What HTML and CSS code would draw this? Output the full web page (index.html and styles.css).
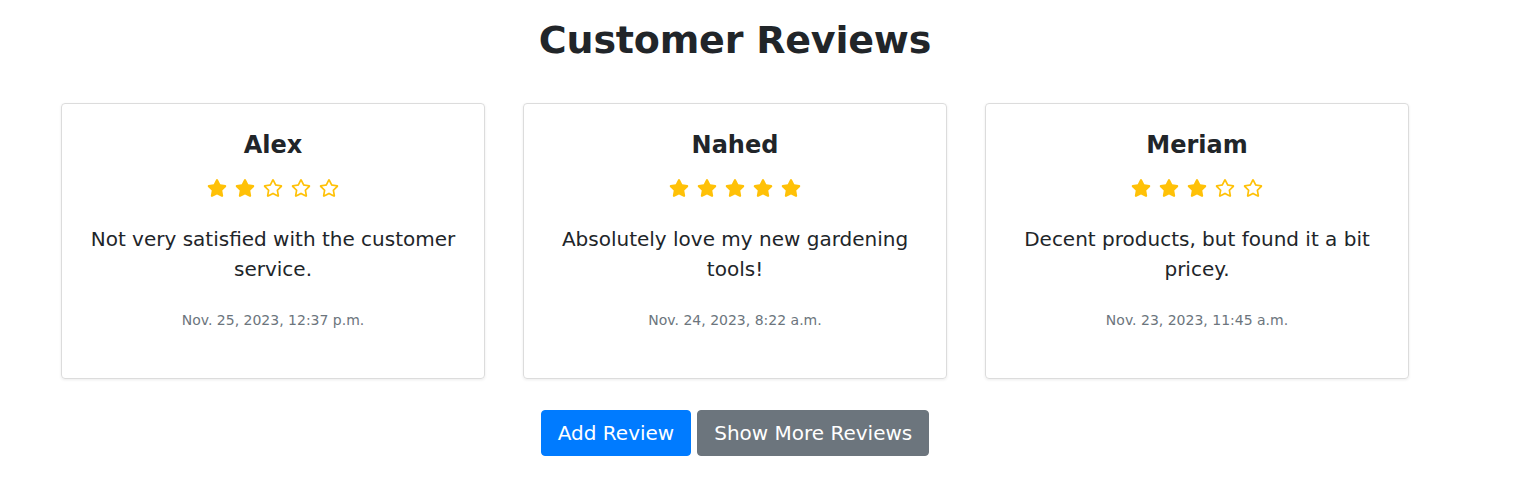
FILE: index.html
```html
<!DOCTYPE html>
<html lang="en">
<head>
<meta charset="utf-8">
<title>Customer Reviews</title>
<link rel="stylesheet" href="styles.css">
</head>
<body>
<svg width="0" height="0" class="defs" aria-hidden="true">
  <defs>
    <symbol id="star-solid" viewBox="0 0 576 512"><path d="M259.3 17.8L194 150.2 47.9 171.5c-26.2 3.8-36.7 36.1-17.7 54.6l105.7 103-25 145.5c-4.5 26.3 23.2 46 46.4 33.7L288 439.6l130.7 68.7c23.2 12.2 50.9-7.4 46.4-33.7l-25-145.5 105.7-103c19-18.5 8.5-50.8-17.7-54.6L382 150.2 316.7 17.8c-11.7-23.6-45.6-23.9-57.4 0z"/></symbol>
    <symbol id="star-outline" viewBox="0 0 576 512"><path d="M528.1 171.5L382 150.2 316.7 17.8c-11.7-23.6-45.6-23.9-57.4 0L194 150.2 47.9 171.5c-26.2 3.8-36.7 36.1-17.7 54.6l105.7 103-25 145.5c-4.5 26.3 23.2 46 46.4 33.7L288 439.6l130.7 68.7c23.2 12.2 50.9-7.4 46.4-33.7l-25-145.5 105.7-103c19-18.5 8.5-50.8-17.7-54.6zM388.6 312.3l23.7 138.4L288 385.4l-124.3 65.3 23.7-138.4-100.6-98 139-20.2 62.2-126 62.2 126 139 20.2-100.6 98z"/></symbol>
  </defs>
</svg>
<main class="page">
  <h1 class="title">Customer Reviews</h1>
  <div class="cards">
    <div class="card">
      <h4 class="name">Alex</h4>
      <div class="stars">
        <svg class="star"><use href="#star-solid"/></svg><svg class="star"><use href="#star-solid"/></svg><svg class="star"><use href="#star-outline"/></svg><svg class="star"><use href="#star-outline"/></svg><svg class="star"><use href="#star-outline"/></svg>
      </div>
      <p class="text">Not very satisfied with the customer service.</p>
      <p class="date">Nov. 25, 2023, 12:37 p.m.</p>
    </div>
    <div class="card">
      <h4 class="name">Nahed</h4>
      <div class="stars">
        <svg class="star"><use href="#star-solid"/></svg><svg class="star"><use href="#star-solid"/></svg><svg class="star"><use href="#star-solid"/></svg><svg class="star"><use href="#star-solid"/></svg><svg class="star"><use href="#star-solid"/></svg>
      </div>
      <p class="text">Absolutely love my new gardening tools!</p>
      <p class="date">Nov. 24, 2023, 8:22 a.m.</p>
    </div>
    <div class="card">
      <h4 class="name">Meriam</h4>
      <div class="stars">
        <svg class="star"><use href="#star-solid"/></svg><svg class="star"><use href="#star-solid"/></svg><svg class="star"><use href="#star-solid"/></svg><svg class="star"><use href="#star-outline"/></svg><svg class="star"><use href="#star-outline"/></svg>
      </div>
      <p class="text">Decent products, but found it a bit pricey.</p>
      <p class="date">Nov. 23, 2023, 11:45 a.m.</p>
    </div>
  </div>
  <div class="actions">
    <button class="btn btn-primary">Add Review</button>
    <button class="btn btn-secondary">Show More Reviews</button>
  </div>
</main>
</body>
</html>
```
FILE: styles.css
```css
html, body {
  margin: 0;
  padding: 0;
  background: #fff;
}
body {
  font-family: "DejaVu Sans", "Open Sans", sans-serif;
  color: #212529;
}
.defs {
  position: absolute;
  width: 0;
  height: 0;
  overflow: hidden;
}
.page {
  width: 1378px;
  margin-left: 46px;
  padding-top: 16px;
}
.title {
  margin: 0;
  font-size: 38px;
  line-height: 48px;
  font-weight: 700;
  letter-spacing: -0.2px;
  text-align: center;
}
.cards {
  display: flex;
  gap: 38px;
  margin-top: 39px;
  padding: 0 15px;
}
.card {
  width: 424px;
  box-sizing: border-box;
  border: 1px solid #dcdcdc;
  border-radius: 4px;
  box-shadow: 0 1px 3px rgba(0,0,0,0.08);
  padding: 27px 20px 47px;
  text-align: center;
  display: flex;
  flex-direction: column;
  align-items: center;
}
.name {
  margin: 0;
  font-size: 24px;
  line-height: 29px;
  font-weight: 700;
}
.stars {
  display: flex;
  gap: 8px;
  margin-top: 18px;
  height: 20px;
}
.star {
  width: 20px;
  height: 20px;
  fill: #ffc107;
}
.text {
  margin: 26px 0 0;
  font-size: 20px;
  line-height: 30px;
  max-width: 370px;
}
.date {
  margin: 25px 0 0;
  font-size: 14px;
  line-height: 22px;
  color: #6c757d;
}
.actions {
  margin-top: 31px;
  display: flex;
  justify-content: center;
  gap: 6px;
}
.btn {
  font-family: inherit;
  font-size: 20px;
  line-height: 30px;
  padding: 7px 16px;
  border: 1px solid transparent;
  border-radius: 4px;
  color: #fff;
  cursor: pointer;
}
.btn-primary {
  background: #007bff;
  border-color: #007bff;
}
.btn-secondary {
  background: #6c757d;
  border-color: #6c757d;
}
```
